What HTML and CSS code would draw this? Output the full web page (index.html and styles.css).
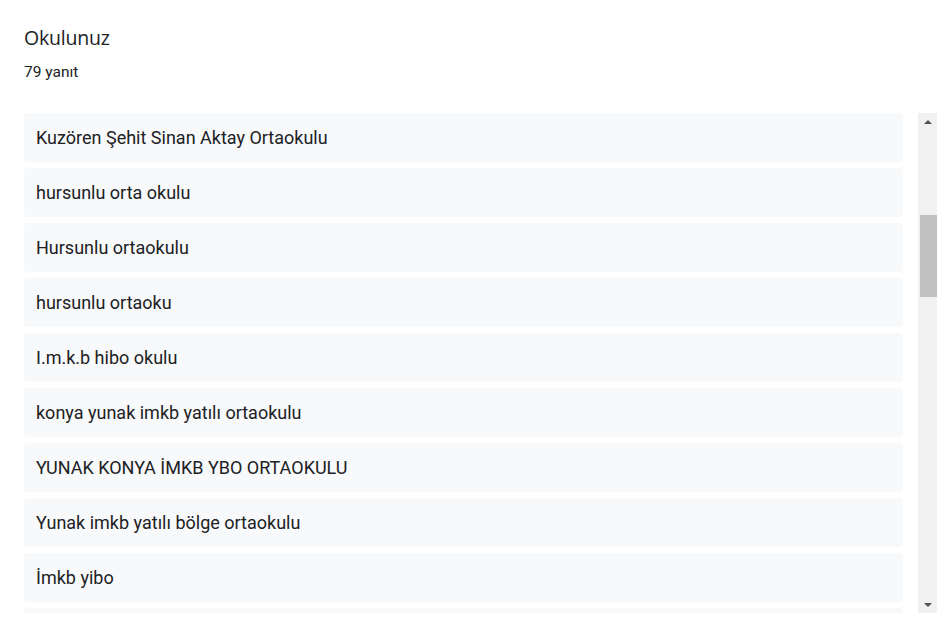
FILE: index.html
```html
<!DOCTYPE html>
<html lang="tr">
<head>
  <meta charset="UTF-8">
  <title>Okulunuz</title>
  <link rel="stylesheet" href="styles.css">
</head>
<body>
  <div class="card">
    <h2 class="title">Okulunuz</h2>
    <div class="count">79 yanıt</div>

    <div class="answers">
      <div class="list">
        <div class="item">Kuzören Şehit Sinan Aktay Ortaokulu</div>
        <div class="item">hursunlu orta okulu</div>
        <div class="item">Hursunlu ortaokulu</div>
        <div class="item">hursunlu ortaoku</div>
        <div class="item">I.m.k.b hibo okulu</div>
        <div class="item">konya yunak imkb yatılı ortaokulu</div>
        <div class="item">YUNAK KONYA İMKB YBO ORTAOKULU</div>
        <div class="item">Yunak imkb yatılı bölge ortaokulu</div>
        <div class="item">İmkb yibo</div>
        <div class="item">&nbsp;</div>
      </div>

      <div class="scrollbar">
        <div class="arrow up"></div>
        <div class="track">
          <div class="thumb"></div>
        </div>
        <div class="arrow down"></div>
      </div>
    </div>
  </div>
</body>
</html>
```

FILE: styles.css
```css
body {
  margin: 0;
  background: #fff;
  font-family: Roboto, Arial, sans-serif;
  color: #202124;
}

.card {
  padding: 24px 10px 0 24px;
}

.title {
  margin: 0;
  font-family: "Open Sans", Roboto, sans-serif;
  font-size: 19.5px;
  font-weight: 400;
  line-height: 28px;
  letter-spacing: -0.2px;
}

.count {
  margin-top: 9px;
  font-size: 15.5px;
  line-height: 22px;
  height: 52px;
}

.answers {
  display: flex;
  height: 500px;
  overflow: hidden;
}

.list {
  flex: 1;
  display: flex;
  flex-direction: column;
  gap: 6px;
  margin-right: 15px;
}

.item {
  flex: none;
  height: 49px;
  line-height: 49px;
  padding: 0 12px;
  background: #f8f9fa;
  border-radius: 4px;
  font-size: 18px;
  white-space: nowrap;
}

.scrollbar {
  width: 19px;
  flex: none;
  display: flex;
  flex-direction: column;
  background: #f1f1f1;
}

.arrow {
  height: 17px;
  display: flex;
  align-items: center;
  justify-content: center;
}

.arrow::before {
  content: "";
  border-left: 4px solid transparent;
  border-right: 4px solid transparent;
}

.arrow.up::before {
  border-bottom: 4px solid #505050;
}

.arrow.down::before {
  border-top: 4px solid #505050;
}

.track {
  flex: 1;
  padding-top: 85px;
}

.thumb {
  height: 82px;
  margin-left: 2px;
  background: #c1c1c1;
}
```
